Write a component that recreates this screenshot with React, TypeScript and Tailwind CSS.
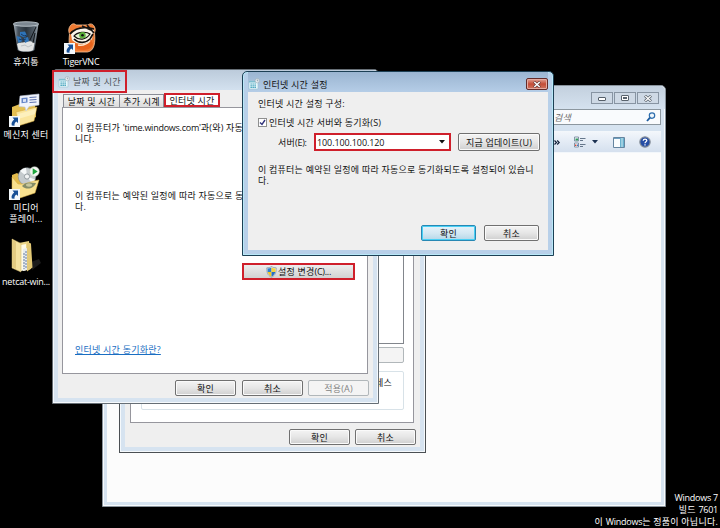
import React from 'react';
import clsx from 'clsx';

type ButtonProps = {
  children?: React.ReactNode;
  className?: string;
  variant?: 'normal' | 'default' | 'disabled';
};

function Button({ children, className, variant = 'normal' }: ButtonProps) {
  return (
    <button
      className={clsx(
        'flex shrink-0 items-center justify-center whitespace-nowrap rounded-[2px] border leading-none',
        variant === 'normal' &&
          'border-[#707070] bg-linear-to-b from-[#f4f4f4] via-[#e6e6e6] to-[#cfcfcf] shadow-[inset_0_0_0_1px_#fafafa]',
        variant === 'default' &&
          'border-[#2788b4] bg-linear-to-b from-[#e6f3fa] via-[#d4e8f3] to-[#b5d7e8] shadow-[inset_0_0_0_1px_#48d0f5]',
        variant === 'disabled' && 'border-[#b1b7ba] bg-[#f4f4f4] text-[#838383]',
        className
      )}
    >
      {children}
    </button>
  );
}

// Latin runs are set tighter than the Hangul around them
function Latin({ children }: { children: React.ReactNode }) {
  return <span className="tracking-[-0.250px]">{children}</span>;
}

function CalendarIcon() {
  return (
    <svg width="12" height="12" viewBox="0 0 12 12" className="shrink-0">
      <path d="M1 3h9v8H1z" fill="#e9f7fb" stroke="#9cc8d4" strokeWidth=".6" />
      <path d="M1 3h7v1.500H1z" fill="#7ebfd0" />
      <path d="M2.500 6h6M2.500 7.800h6M2.500 9.500h6" stroke="#2f98b4" strokeWidth="1.200" strokeDasharray="1.300 .700" />
      <circle cx="9.300" cy="2.700" r="2.200" fill="#e8eef2" stroke="#9aabb5" strokeWidth=".6" />
      <path d="M9.300 1.500v1.300h1" stroke="#637b88" strokeWidth=".6" fill="none" />
    </svg>
  );
}

function ShieldIcon() {
  return (
    <svg width="11" height="12" viewBox="0 0 11 12" className="shrink-0">
      <path d="M5.500.500C4 1.500 2.300 1.900.800 1.800c0 4.500.600 7.200 4.700 9.600 4.100-2.400 4.700-5.100 4.700-9.600C8.700 1.900 7 1.500 5.500.500z" fill="#e9edf0" stroke="#7d8d9a" strokeWidth=".7" />
      <path d="M5.500 1.400C4.300 2.100 3 2.400 1.500 2.500L1.700 6h3.800z" fill="#2f7fd0" />
      <path d="M5.500 1.400c1.200.700 2.500 1 4 1.100L9.300 6H5.500z" fill="#f7d33c" />
      <path d="M1.700 6c.400 1.900 1.700 3.500 3.800 4.700V6z" fill="#f2c824" />
      <path d="M9.300 6c-.400 1.900-1.700 3.500-3.800 4.700V6z" fill="#2670c4" />
    </svg>
  );
}

function ShortcutArrow() {
  return (
    <svg width="11" height="11" viewBox="0 0 11 11" className="absolute -left-px bottom-0">
      <path d="M0 0h11v11H0z" fill="#f2f7fb" />
      <path d="M3.500 1.500H9V7L7.300 5.400C6 6.300 5.300 7.400 5.500 9.800L2.800 9.500C2 7 3.200 5 5.200 3.400z" fill="#164f96" />
    </svg>
  );
}

function RecycleBin() {
  return (
    <svg width="28" height="34" viewBox="0 0 28 34">
      <defs>
        <linearGradient id="glass" x1="0" x2="1">
          <stop offset="0" stopColor="#a7b1ba" />
          <stop offset=".18" stopColor="#46525d" />
          <stop offset=".5" stopColor="#2a343d" />
          <stop offset=".82" stopColor="#525e69" />
          <stop offset="1" stopColor="#a9b3bb" />
        </linearGradient>
      </defs>
      <path d="M1.500 4l4 26c2 2.800 15 2.800 17 0l4-26z" fill="url(#glass)" />
      <path d="M5 24c2-2 5-1 8-2s7-1 9.500 1l-1.200 7c-3 2-12 2-14.800 0z" fill="#e2e4e4" />
      <path d="M9 26l4-1 3 2 4-2" stroke="#b3b9bc" strokeWidth=".8" fill="none" />
      <path d="M4.500 16l4 1 2 4-4 2zM8 12l5-.500 2 4-3 2-4-2zM12 18l4-1 1 4-4 2z" fill="#2f74b8" />
      <path d="M9 14l3 2 3-1M7 19l3 1 4-1" fill="none" stroke="#153a66" />
      <path d="M24 7L18 20M23 13l-2 10" stroke="#101418" strokeWidth="1" />
      <ellipse cx="14" cy="4" rx="12.700" ry="2.300" fill="#7c8791" stroke="#c7d0d7" strokeWidth=".8" />
    </svg>
  );
}

function TigerIcon() {
  return (
    <svg width="32" height="32" viewBox="0 0 32 32">
      <path d="M6 3c2-2 4-1 5 0h12c2-2 5-1 6 1 2 3 1 5 .500 7 1 9 0 18-7 19H10C4 29 3.500 21 4.500 12 3 8 4 5 6 3z" fill="#ee7a32" stroke="#f8c79c" strokeWidth=".8" />
      <path d="M6 12C10 5 19 4 29 8l-2 9c-4 6-14 7-20 1z" fill="#fbf6ec" />
      <path d="M5 12C10 6 18 4 29 7M9 17c5 5 12 4 16 0l3-5M22 3l7 8M17 4l9 4" fill="none" stroke="#15110e" strokeWidth="1.700" />
      <path d="M9 14c3-4 12-5 16-2-4 6-11 7-16 2z" fill="#e4f2d3" stroke="#15110e" strokeWidth="1.200" />
      <circle cx="17.500" cy="13.300" r="3.200" fill="#5bb03a" />
      <circle cx="17.500" cy="13.300" r="1.300" fill="#111" />
      <path d="M9 21c5 3 12 2 17-3l2 4c-2 6-8 7-16 5z" fill="#e8641d" />
      <path d="M13 23c5 1 9-1 12-4" fill="none" stroke="#fbe6cf" strokeWidth="1.300" />
    </svg>
  );
}

function MessengerIcon() {
  return (
    <svg width="32" height="34" viewBox="0 0 32 34">
      <path d="M2 14l8-3 3 2 12-3 1 14-18 8-6-5z" fill="#e5c052" />
      <path d="M6 19l21-5-3 14-16 5z" fill="#fae59d" stroke="#d3a537" strokeWidth=".5" />
      <path d="M8 21l18-5-1 5-17 5z" fill="#fdf0bd" />
      <path d="M10 3l19-2v11l-10 1.500-3 4.500-1-4-6-.500z" fill="#f1f4fb" stroke="#c0cadd" strokeWidth=".6" />
      <path d="M11.500 5l6-.600v5.200l-6 .600z" fill="#6787c9" />
      <path d="M13 6.200l3-.300v2.800l-3 .300z" fill="#dce5f7" />
      <path d="M19.500 4.500l7-.500M19.500 7l7-.500M19.500 9.500l7-.500" stroke="#5b70ae" strokeWidth="1" />
    </svg>
  );
}

function MediaIcon() {
  return (
    <svg width="32" height="34" viewBox="0 0 32 34">
      <path d="M2 9l5-2 4 3 14-1v15L6 31l-4-4z" fill="#e3bb4c" />
      <circle cx="17" cy="10.500" r="8.800" fill="#c5cbce" stroke="#858f94" strokeWidth=".6" />
      <path d="M17 10.500L10 5a9 9 0 0 1 6-3.300zM17 10.500l8 3-3 4z" fill="#f5f8f9" />
      <circle cx="17" cy="10.500" r="2.600" fill="#f1f3f4" stroke="#828b90" strokeWidth=".8" />
      <path d="M2 11l6 7c7 1 13-3 21-4l-4 13-18 6-5-6z" fill="#f9e18f" stroke="#d5aa40" strokeWidth=".5" />
      <path d="M12 20c3-4 8-4 14-3-2 5-9 8-14 3z" fill="#858d68" />
      <ellipse cx="19" cy="19" rx="3" ry="1.700" fill="#c8c79c" />
      <circle cx="24.500" cy="5.500" r="4.800" fill="#f4f7f3" stroke="#b6c3b4" strokeWidth=".5" />
      <path d="M22.700 2.300l5 3.200-5 3.200z" fill="#1da43c" />
    </svg>
  );
}

function FolderIcon() {
  return (
    <svg width="32" height="36" viewBox="0 0 32 36">
      <path d="M21 24l8-3 2 4-9 7z" fill="#1b1b1b" />
      <path d="M9 5l10-2 2 28-8 2z" fill="#ecd689" />
      <path d="M11 7l5-1v26l-5 1z" fill="#fffbe6" />
      <path d="M13 11l4-1v22l-4 1z" fill="#e7ecef" />
      <path d="M14 15v16M16 13v17" stroke="#5a7396" strokeDasharray="2 1" strokeWidth=".9" />
      <path d="M17 4l4 1.500 1.500 24-5.500 4z" fill="#e3c976" />
      <path d="M2 1l9 4.500v28.500L2 30z" fill="#f5e2a0" stroke="#cbb166" strokeWidth=".5" />
      <path d="M2 1l4 3v27l-4-2z" fill="#e3cb82" />
    </svg>
  );
}

type DesktopIconProps = { icon: React.ReactNode; label: React.ReactNode; className: string; shortcut?: boolean };

function DesktopIcon({ icon, label, className, shortcut }: DesktopIconProps) {
  return (
    <div className={clsx('absolute flex w-[54px] flex-col items-center text-white', className)}>
      <div className="relative">
        {icon}
        {shortcut && <ShortcutArrow />}
      </div>
      <div className="mt-0.5 whitespace-nowrap text-center leading-[11px]">{label}</div>
    </div>
  );
}

function ExplorerWindow() {
  return (
    <section className="absolute left-[102px] top-[85px] flex h-[422px] w-[564px] flex-col rounded-t-[5px] border border-[#88929b] bg-[#d6e3f0] px-1 pb-1 shadow-[inset_0_0_0_1px_#f8fbfd]">
      <div className="-mx-1 flex h-[23px] shrink-0 justify-end rounded-t-[5px] bg-linear-to-b from-[#c3d0de] to-[#d5e2ef] px-1.5 pt-1.5">
        <div className="flex h-3 gap-px">
          <span className="flex w-[22px] items-center justify-center border border-[#8794a2] bg-[#ced9e5]">
            <span className="mt-px h-1 w-2 rounded-[1px] border border-[#555f69] bg-white" />
          </span>
          <span className="flex w-[22px] items-center justify-center border border-[#8794a2] bg-[#ced9e5]">
            <span className="flex h-1.5 w-2 items-center justify-center rounded-[1px] border border-[#59636d] bg-white">
              <span className="h-0.5 w-1 bg-[#59636d]" />
            </span>
          </span>
          <span className="flex w-[22px] items-center justify-center border border-[#8794a2] bg-[#ced9e5]">
            <svg width="8" height="7" viewBox="0 0 8 7">
              <path d="M1 .800l6 5.400M7 .800L1 6.200" stroke="#505a64" strokeWidth="2.700" />
              <path d="M1.300 1l5.400 5M6.700 1L1.300 6" stroke="#fff" strokeWidth="1.200" />
            </svg>
          </span>
        </div>
      </div>
      <div className="flex h-[22px] shrink-0 items-start justify-end">
        <div className="flex h-4 w-[120px] items-center justify-between border border-[#8c979f] bg-[#f9fbfd] pl-3 pr-1">
          <span className="italic text-[#6a6a6a]">검색</span>
          <svg width="10" height="10" viewBox="0 0 10 10">
            <circle cx="6" cy="3.600" r="2.700" fill="#eef6fc" stroke="#2c6dad" strokeWidth="1.200" />
            <path d="M4 5.600L1 9" stroke="#1d5c9f" strokeWidth="1.800" />
          </svg>
        </div>
      </div>
      <div className="flex h-[22px] shrink-0 items-center justify-end border-y border-[#f3f7fb] bg-linear-to-b from-[#f2f6fb] via-[#e3ebf5] to-[#d5e0ee] pr-2.5">
        <svg width="6" height="5" viewBox="0 0 6 5" className="mr-[14px]">
          <path d="M.500.500l2 2-2 2M3.200.500l2 2-2 2" fill="none" stroke="#12203a" strokeWidth="1.200" />
        </svg>
        <svg width="12" height="12" viewBox="0 0 12 12">
          <path d="M.500 1h4v4h-4zM.500 7h4v4h-4z" fill="#f8fafc" stroke="#6b7f94" strokeWidth=".8" />
          <path d="M1.500 2.500h2.500v2H1.500z" fill="#2e9a5c" />
          <path d="M1 8.500h1.500V10H1z" fill="#d94836" />
          <path d="M3 8.500h1.300V10H3z" fill="#3c79c6" />
          <path d="M6 2.500h5.500M6 4.500h3M6 8.500h5.500M6 10.500h3" stroke="#66778b" strokeWidth="1" />
        </svg>
        <svg width="6" height="4" viewBox="0 0 6 4" className="ml-[6px]">
          <path d="M0 0h6L3 3.500z" fill="#1c3152" />
        </svg>
        <svg width="12" height="11" viewBox="0 0 12 11" className="ml-[15px]">
          <path d="M.500.500h11v10H.500z" fill="#fbfdfe" stroke="#6685a0" />
          <path d="M1 1.500h10" stroke="#6e9fc0" />
          <path d="M7 1h4v9H7z" fill="#69b1ce" />
          <path d="M9 1v9" stroke="#d3ecf4" />
        </svg>
        <svg width="12" height="12" viewBox="0 0 12 12" className="ml-3.5">
          <circle cx="6" cy="6" r="5.200" fill="#254da5" stroke="#8a929b" strokeWidth="1.200" />
          <path d="M4.200 4.700C4.300 2.500 7.800 2.600 7.800 4.600 7.800 5.800 6 5.700 6 7.200M6 8.200v1.300" fill="none" stroke="#fff" strokeWidth="1.300" />
        </svg>
      </div>
      <div className="flex-1 bg-[#fcfcfc]" />
    </section>
  );
}

function PropertiesWindow() {
  return (
    <section className="absolute left-[119px] top-[200px] flex h-[253px] w-[307px] border border-[#4b5054] bg-[#d6e3f0] p-[5px] shadow-[inset_0_0_0_1px_#f5f9fc]">
      <div className="flex flex-1 flex-col bg-[#efefef] pl-[5px] pr-1.5">
        <div className="flex h-[217px] shrink-0 flex-col border border-[#96969d] bg-white pl-2.5 pr-[9px]">
          <div className="h-[137px] shrink-0 border border-[#82868c]" />
          <div className="mt-[3px] h-4 shrink-0 rounded-[2px] border border-[#b1b7ba] bg-[#f4f4f4]" />
          <div className="mt-[8px] flex h-[39px] shrink-0 justify-end rounded-[2px] border border-[#d8e2e8] pr-[11px] pt-[5px]">
            <span className="leading-[11px]">프로세스</span>
          </div>
        </div>
        <div className="mt-[6px] flex justify-end gap-[5px]">
          <Button className="h-4 w-[61px]">확인</Button>
          <Button className="-mr-0.5 h-4 w-[61px]">취소</Button>
        </div>
      </div>
    </section>
  );
}

function DateTimeWindow() {
  return (
    <section className="absolute left-[52px] top-[69px] flex h-[335px] w-[327px] flex-col rounded-t-[5px] border border-[#666e75] bg-[#d6e3f0] px-[5px] pb-[5px] shadow-[inset_0_0_0_1px_#f5f9fc]">
      <div className="-mx-[5px] flex h-[20px] shrink-0 items-start rounded-t-[5px] bg-linear-to-b from-[#bccbdb] to-[#d3e1ef]">
        <div className="relative z-10 -ml-px flex h-[23px] w-[75px] shrink-0 items-center gap-[3px] border-2 border-[#cf1f2b] pl-1 text-[#4d5358]">
          <CalendarIcon />
          <span className="whitespace-nowrap">날짜 및 시간</span>
        </div>
      </div>
      <div className="flex flex-1 flex-col bg-[#efefef] pl-1 pr-[5px] pt-[3px]">
        <div className="flex h-[14px] shrink-0 items-end pl-px">
          <span className="flex h-[13px] w-[57px] items-center justify-center whitespace-nowrap border border-b-0 border-[#898c95] bg-linear-to-b from-[#f4f4f4] to-[#dcdcdc]">날짜 및 시간</span>
          <span className="flex h-[13px] w-[44px] items-center justify-center whitespace-nowrap border border-b-0 border-l-0 border-[#898c95] bg-linear-to-b from-[#f4f4f4] to-[#dcdcdc]">추가 시계</span>
          <span className="relative flex h-[14px] w-[56px] items-center justify-center whitespace-nowrap border-2 border-[#cf1f2b] bg-white leading-none">인터넷 시간</span>
        </div>
        <div className="flex h-[267px] shrink-0 flex-col border border-[#96969d] bg-white px-3 pt-[14px] leading-[11px]">
          <p className="whitespace-nowrap">
            이 컴퓨터가 <Latin>'time.windows.com'</Latin>과(와) 자동으로
            <br />
            니다.
          </p>
          <p className="mt-[46px] whitespace-nowrap">
            이 컴퓨터는 예약된 일정에 따라 자동으로 동기
            <br />
            다.
          </p>
          <div className="flex justify-end pt-[51px]">
            <button className="flex h-[17px] w-[113px] items-center justify-center gap-px border-2 border-[#cf1f2b] bg-linear-to-b from-[#ededed] to-[#d2d2d2]">
              <ShieldIcon />
              <span>설정 변경<Latin>(C)...</Latin></span>
            </button>
          </div>
          <a className="mt-[64px] w-fit text-[#1a6ec2] underline">인터넷 시간 동기화란?</a>
        </div>
        <div className="mt-[6px] flex justify-end gap-[6px]">
          <Button className="h-4 w-[61px]">확인</Button>
          <Button className="h-4 w-[61px]">취소</Button>
          <Button className="-mr-px -ml-px h-4 w-[61px]" variant="disabled">적용(A)</Button>
        </div>
      </div>
    </section>
  );
}

function InternetTimeWindow() {
  return (
    <section className="absolute left-[242px] top-[71px] flex h-[185px] w-[312px] flex-col rounded-t-[5px] border border-[#1d4055] bg-[#b8d0e9] px-[5px] pb-[5px] shadow-[inset_0_0_0_1px_#b8e8f8]">
      <div className="flex h-[20px] shrink-0 items-center justify-between bg-linear-to-b from-[#9bb5d1] to-[#b5cde7]">
        <div className="flex items-center gap-[3px] pt-1">
          <CalendarIcon />
          <span>인터넷 시간 설정</span>
        </div>
        <button className="mt-1 flex h-[12px] w-[22px] items-center justify-center rounded-[2px] border border-[#632b29] bg-linear-to-b from-[#dfa297] via-[#c44c37] to-[#ce7561] shadow-[inset_0_0_0_1px_#e5aaa0]">
          <svg width="8" height="7" viewBox="0 0 8 7">
            <path d="M1 .800l6 5.400M7 .800L1 6.200" stroke="#5f3b3b" strokeWidth="2.700" />
            <path d="M1.300 1l5.400 5M6.700 1L1.300 6" stroke="#fff" strokeWidth="1.400" />
          </svg>
        </button>
      </div>
      <div className="flex flex-1 flex-col bg-[#efefef] pl-[10px] pr-2 leading-[11px]">
        <p className="mt-[6px]">인터넷 시간 설정 구성:</p>
        <label className="mt-[8px] flex items-center gap-[2px]">
          <span className="flex size-[9px] items-center justify-center border border-[#8e8f8f] bg-white">
            <svg width="7" height="7" viewBox="0 0 7 7">
              <path d="M1 3.500l2 2L6 1" fill="none" stroke="#31347c" strokeWidth="1.400" />
            </svg>
          </span>
          <span>인터넷 시간 서버와 동기화(S)</span>
        </label>
        <div className="mt-[5px] flex h-[18px] items-center pl-5">
          <span className="w-[36px] shrink-0 whitespace-nowrap">서버<Latin>(E):</Latin></span>
          <div className="flex h-[18px] w-[137px] shrink-0 items-center justify-between border-2 border-[#cf1f2b] bg-white pl-px pr-1">
            <span className="tracking-[-0.100px]">100.100.100.120</span>
            <svg width="6" height="4" viewBox="0 0 6 4">
              <path d="M0 0h6L3 3.500z" fill="#111" />
            </svg>
          </div>
          <Button className="ml-[7px] h-[18px] w-[82px]">지금 업데이트(U)</Button>
        </div>
        <p className="mt-[13px] whitespace-nowrap">
          이 컴퓨터는 예약된 일정에 따라 자동으로 동기화되도록 설정되어 있습니
          <br />
          다.
        </p>
        <div className="mb-[9px] mt-auto flex justify-end gap-2 pr-px">
          <Button className="h-4 w-[55px]" variant="default">확인</Button>
          <Button className="h-4 w-[55px]">취소</Button>
        </div>
      </div>
    </section>
  );
}

export default function App() {
  return (
    <main className="relative h-[528px] w-[720px] overflow-hidden bg-black font-['Open_Sans','Noto_Sans_CJK_KR',sans-serif] text-[9px] leading-[11px] tracking-[0.230px] text-[#111]">
      <DesktopIcon className="-left-px top-5" icon={<RecycleBin />} label="휴지통" />
      <DesktopIcon className="left-[54px] top-[22px]" icon={<TigerIcon />} label={<Latin>TigerVNC</Latin>} shortcut />
      <DesktopIcon className="-left-px top-[93px]" icon={<MessengerIcon />} label="메신저 센터" shortcut />
      <DesktopIcon
        className="-left-px top-[166px]"
        icon={<MediaIcon />}
        label={
          <>
            미디어
            <br />
            플레이...
          </>
        }
        shortcut
      />
      <DesktopIcon className="-left-px top-[238px]" icon={<FolderIcon />} label={<Latin>netcat-win...</Latin>} />
      <ExplorerWindow />
      <PropertiesWindow />
      <DateTimeWindow />
      <InternetTimeWindow />
      <div className="absolute bottom-0 right-[2px] text-right leading-[12px] text-white">
        <p><Latin>Windows 7</Latin></p>
        <p>빌드 <Latin>7601</Latin></p>
        <p>이 <Latin>Windows</Latin>는 정품이 아닙니다.</p>
      </div>
    </main>
  );
}
